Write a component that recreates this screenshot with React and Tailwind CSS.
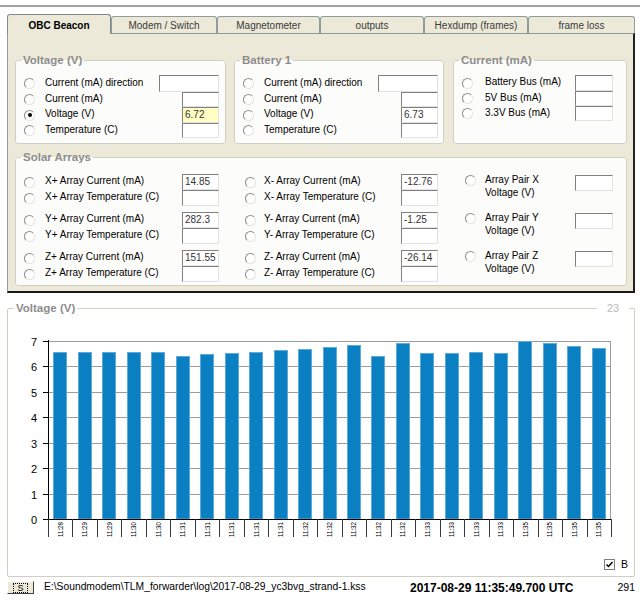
import React from "react";

const tabs = [
  { label: "OBC Beacon", w: "w-[104px]", active: true },
  { label: "Modem / Switch", w: "w-[106px]" },
  { label: "Magnetometer", w: "w-[103px]" },
  { label: "outputs", w: "w-[104px]" },
  { label: "Hexdump (frames)", w: "w-[104px]" },
  { label: "frame loss", w: "w-[107px]" },
];

const voltRows = [
  { label: "Current (mA) direction", h: "h-[17px]", wide: true },
  { label: "Current (mA)", h: "h-[15px]" },
  { label: "Voltage (V)", h: "h-[16px]", checked: true, value: "6.72", yellow: true },
  { label: "Temperature (C)", h: "h-[15px]" },
];

const battRows = [
  { label: "Current (mA) direction", h: "h-[17px]", wide: true },
  { label: "Current (mA)", h: "h-[15px]" },
  { label: "Voltage (V)", h: "h-[16px]", value: "6.73" },
  { label: "Temperature (C)", h: "h-[15px]" },
];

const currRows = [
  { label: "Battery Bus (mA)", h: "h-[16px]" },
  { label: "5V Bus (mA)", h: "h-[15px]" },
  { label: "3.3V Bus (mA)", h: "h-[15px]" },
];

const solar = [
  { axis: "X", plus: "14.85", minus: "-12.76" },
  { axis: "Y", plus: "282.3", minus: "-1.25" },
  { axis: "Z", plus: "151.55", minus: "-26.14" },
];

const vals = [
  6.58, 6.58, 6.58, 6.58, 6.56, 6.42, 6.48, 6.52, 6.58, 6.65, 6.68, 6.76,
  6.84, 6.4, 6.92, 6.52, 6.52, 6.56, 6.52, 7.0, 6.92, 6.8, 6.72,
];
const times = [
  "11:28", "11:29", "11:29", "11:30", "11:30", "11:31", "11:31", "11:31",
  "11:31", "11:31", "11:32", "11:32", "11:32", "11:32", "11:32", "11:33",
  "11:33", "11:33", "11:33", "11:35", "11:35", "11:35", "11:35",
];

const Radio = ({ checked }) => (
  <span className="flex-none w-[11px] h-[11px] rounded-full border border-t-[#8c8c8c] border-l-[#8c8c8c] border-r-[#e4e4e4] border-b-[#e4e4e4] bg-white flex items-center justify-center">
    {checked && <span className="w-[4px] h-[4px] rounded-full bg-black" />}
  </span>
);

const Box = ({ className, value, yellow }) => (
  <div
    className={`flex items-center pl-[2px] text-[10px] leading-none text-[#333] border border-t-[#808080] border-l-[#808080] border-r-[#e2e2e2] border-b-[#e2e2e2] ${
      yellow ? "bg-[#ffffc4]" : "bg-white"
    } ${className}`}
  >
    {value}
  </div>
);

const Group = ({ title, className, children }) => (
  <fieldset className={`min-w-0 border border-[#d0cfc4] rounded-[3px] bg-[#fcfcfa] ${className}`}>
    <legend className="ml-[5px] px-[2px] text-[11.5px] leading-[14px] font-bold text-[#8d8d8d]">
      {title}
    </legend>
    {children}
  </fieldset>
);

const FourRows = ({ rows }) => (
  <div className="mt-[8px]">
    {rows.map((r, i) => (
      <div key={i} className={`flex items-center pl-[8px] ${r.h}`}>
        <Radio checked={r.checked} />
        <span className="ml-[10px] w-[114px] text-[10px] leading-none pb-[2px] whitespace-nowrap">
          {r.label}
        </span>
        <div className="w-[60px] h-full flex justify-end">
          <Box
            className={r.wide ? "w-[60px] h-full" : "w-[37px] h-full"}
            value={r.value}
            yellow={r.yellow}
          />
        </div>
      </div>
    ))}
  </div>
);

const SolarRow = ({ pad, gap, label, value }) => (
  <div className={`flex items-center h-[16px] ${pad}`}>
    <Radio />
    <span className={`${gap} w-[137px] text-[10px] leading-none pb-[2px] whitespace-nowrap`}>
      {label}
    </span>
    <Box className="w-[37px] h-full" value={value} />
  </div>
);

const Chart = () => {
  const x0 = 48;
  const x1 = 611;
  const y0 = 519;
  const yTop = 341;
  const unit = (y0 - yTop) / 7;
  const cw = (x1 - x0) / 23;
  return (
    <svg width="626" height="240" viewBox="8 315 626 240" className="block">
      {[1, 2, 3, 4, 5, 6, 7].map((k) => {
        const y = Math.round(y0 - k * unit) + 0.5;
        return <line key={k} x1={x0} x2={x1} y1={y} y2={y} stroke="#9c9c9c" />;
      })}
      <line x1={x1 - 0.5} x2={x1 - 0.5} y1={yTop} y2={y0} stroke="#9c9c9c" />
      {vals.map((v, i) => {
        const cx = x0 + cw * (i + 0.5);
        const top = Math.round(y0 - v * unit) + 0.5;
        return (
          <rect
            key={i}
            x={Math.round(cx - 7) + 0.5}
            y={top}
            width="13"
            height={y0 - top}
            fill="#0a7fc1"
            stroke="#5eaadb"
          />
        );
      })}
      <line x1={x0 + 0.5} x2={x0 + 0.5} y1={yTop - 1} y2={y0} stroke="#000" />
      <line x1={43} x2={x1} y1={y0 + 0.5} y2={y0 + 0.5} stroke="#000" />
      {[0, 1, 2, 3, 4, 5, 6, 7].map((k) => {
        const y = Math.round(y0 - k * unit) + 0.5;
        return (
          <g key={k}>
            <line x1={43} x2={x0} y1={y} y2={y} stroke="#000" />
            <text x="37" y={y + 4} fontSize="11" textAnchor="end" fill="#000">
              {k}
            </text>
          </g>
        );
      })}
      {Array.from({ length: 24 }).map((_, i) => {
        const x = Math.round(x0 + i * cw) + 0.5;
        return <line key={i} x1={x} x2={x} y1={y0} y2={537} stroke="#3a3a3a" />;
      })}
      {times.map((t, i) => {
        const cx = x0 + cw * (i + 0.5) + 2.5;
        return (
          <text
            key={i}
            x={cx}
            y={522}
            fontSize="7.5"
            textAnchor="end"
            fill="#000"
            textLength="15"
            lengthAdjust="spacingAndGlyphs"
            transform={`rotate(-90 ${cx} 522)`}
          >
            {t}
          </text>
        );
      })}
    </svg>
  );
};

export default function App() {
  return (
    <div className="w-[640px] h-[607px] bg-white overflow-hidden text-black font-['Liberation_Sans',Arial,sans-serif]">
      <div className="h-[5px]" />
      <div className="h-[2px] bg-[#a3a3a3]" />
      <div className="h-[7px]" />

      {/* Tabs */}
      <div className="flex items-end h-[19px] pl-[7px]">
        {tabs.map((t) =>
          t.active ? (
            <div
              key={t.label}
              className={`${t.w} relative z-10 -mb-px h-[20px] flex items-center justify-center pt-[2px] bg-[#ece9d8] border-t border-l border-r border-[#7f8a8b] rounded-t-[3px] text-[10px] font-bold`}
            >
              {t.label}
            </div>
          ) : (
            <div
              key={t.label}
              className={`${t.w} h-[17px] flex items-center justify-center bg-[#ece9d8] border-t border-l border-r border-[#919b9c] rounded-t-[3px] text-[10px] text-[#3c3c3c]`}
            >
              {t.label}
            </div>
          )
        )}
      </div>

      {/* Tab page */}
      <div className="ml-[7px] w-[628px] h-[260px] bg-[#ece9d8] border-t border-l border-[#919b9c] border-r-2 border-r-[#222] border-b-2 border-b-[#1a1a1a] pt-[19px] pl-[7px]">
        <div className="flex h-[91px]">
          <Group title="Voltage (V)" className="w-[211px] h-[91px]">
            <FourRows rows={voltRows} />
          </Group>
          <Group title="Battery 1" className="ml-[8px] w-[210px] h-[91px]">
            <FourRows rows={battRows} />
          </Group>
          <Group title="Current (mA)" className="ml-[9px] w-[174px] h-[91px]">
            <div className="mt-[8px]">
              {currRows.map((r) => (
                <div key={r.label} className={`flex items-center pl-[8px] ${r.h}`}>
                  <Radio />
                  <span className="ml-[12px] w-[90px] text-[10px] leading-none pb-[2px] whitespace-nowrap">
                    {r.label}
                  </span>
                  <Box className="w-[38px] h-full" />
                </div>
              ))}
            </div>
          </Group>
        </div>

        <Group title="Solar Arrays" className="mt-[6px] w-[612px] h-[136px]">
          <div className="mt-[10px] flex flex-col gap-[6px]">
            {solar.map((s) => (
              <div key={s.axis} className="flex h-[32px]">
                <div className="w-[229px]">
                  <SolarRow pad="pl-[8px]" gap="ml-[10px]" label={`${s.axis}+ Array Current (mA)`} value={s.plus} />
                  <SolarRow pad="pl-[8px]" gap="ml-[10px]" label={`${s.axis}+ Array Temperature (C)`} />
                </div>
                <div className="w-[220px]">
                  <SolarRow pad="pl-0" gap="ml-[8px]" label={`${s.axis}- Array Current (mA)`} value={s.minus} />
                  <SolarRow pad="pl-0" gap="ml-[8px]" label={`${s.axis}- Array Temperature (C)`} />
                </div>
                <div className="flex items-start">
                  <div className="mt-[1px]">
                    <Radio />
                  </div>
                  <div className="ml-[9px] w-[90px] text-[10px] leading-[13px] -mt-[1px]">
                    <div>Array Pair {s.axis}</div>
                    <div>Voltage (V)</div>
                  </div>
                  <Box className="mt-[1px] w-[38px] h-[16px]" />
                </div>
              </div>
            ))}
          </div>
        </Group>
      </div>

      {/* Chart group */}
      <div className="relative ml-[7px] mt-[8px] w-[628px]">
        <fieldset className="min-w-0 w-[628px] h-[276px] border border-[#d0cfc4] rounded-[2px] bg-white">
          <legend className="ml-[6px] px-[2px] text-[11.5px] leading-[14px] font-bold text-[#8d8d8d]">
            Voltage (V)
          </legend>
          <Chart />
          <div className="h-[19px] flex items-center justify-end pr-[6px] gap-[6px]">
            <span className="w-[11px] h-[11px] border border-[#7f7f7f] bg-white flex items-center justify-center">
              <svg width="9" height="9" viewBox="0 0 9 9">
                <polyline points="1.5,4.5 3.5,6.5 7.5,2" fill="none" stroke="#000" strokeWidth="1.5" />
              </svg>
            </span>
            <span className="text-[10.5px] leading-none">B</span>
          </div>
        </fieldset>
        <div className="absolute left-[590px] top-0 w-[32px] h-[14px] bg-white pl-[10px] text-[11px] leading-[14px] text-[#b8b8b8]">
          23
        </div>
      </div>

      {/* Status bar */}
      <div className="mt-[3px] h-[15px] flex items-center pl-[7px]">
        <div className="w-[27px] h-[13px] bg-[#ece9d8] border border-t-white border-l-white border-r-[#404040] border-b-[#404040] flex items-center justify-center">
          <span className="border border-dotted border-black px-[3px] text-[9px] leading-[8px]">S</span>
        </div>
        <span className="ml-[10px] w-[366px] text-[10.3px] leading-none whitespace-nowrap">
          {"E:\\Soundmodem\\TLM_forwarder\\log\\2017-08-29_yc3bvg_strand-1.kss"}
        </span>
        <span className="text-[12px] font-bold leading-none whitespace-nowrap">
          2017-08-29 11:35:49.700 UTC
        </span>
        <span className="ml-auto pr-[5px] text-[10.5px] leading-none">291</span>
      </div>
    </div>
  );
}
